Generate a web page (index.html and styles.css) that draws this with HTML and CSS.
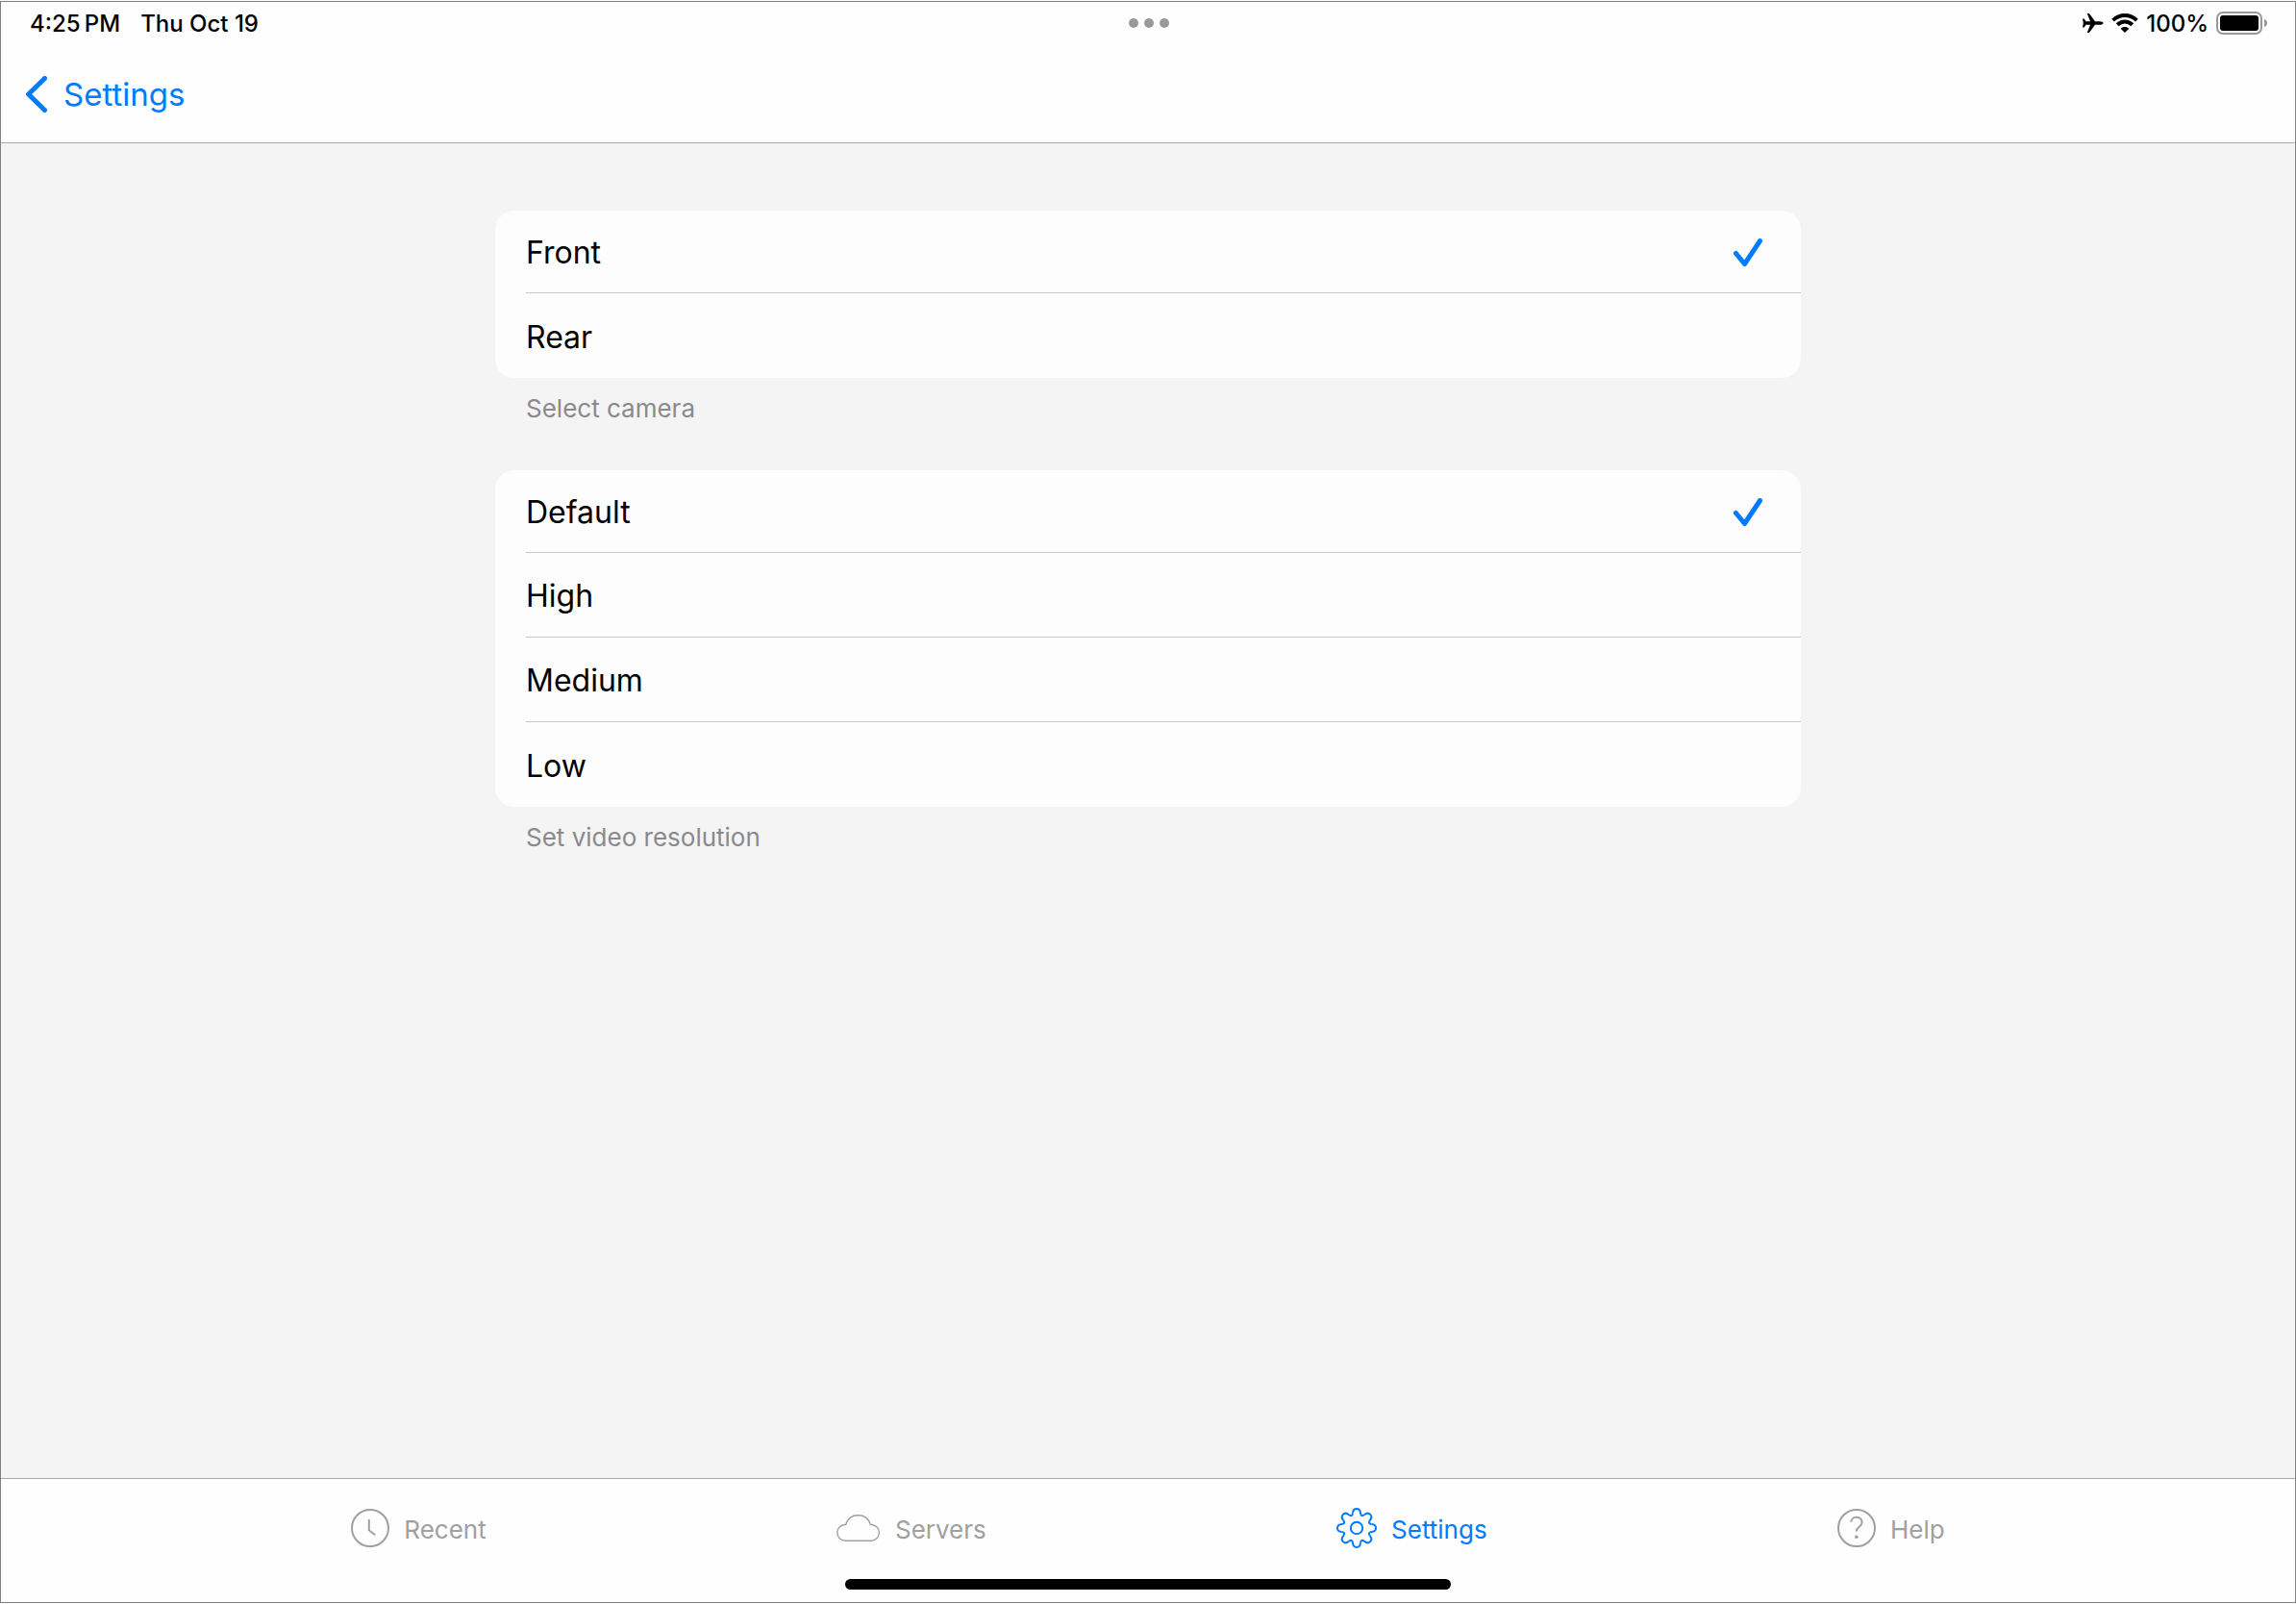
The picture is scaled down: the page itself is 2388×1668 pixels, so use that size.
FILE: index.html
```html
<!DOCTYPE html>
<html lang="en">
<head>
  <meta charset="UTF-8">
  <meta name="viewport" content="width=device-width, initial-scale=1.0">
  <title>Camera Settings</title>
  <link rel="stylesheet" href="styles.css">
</head>
<body>
  <div class="app">

    <div class="status-bar">
      <div class="status-left">
        <span>4:25&#8201;PM</span>
        <span>Thu Oct 19</span>
      </div>
      <svg class="dots" width="42" height="10" viewBox="0 0 42 10">
        <circle cx="5" cy="5" r="5"/>
        <circle cx="21" cy="5" r="5"/>
        <circle cx="37" cy="5" r="5"/>
      </svg>
      <div class="status-right">
        <svg width="22" height="20" viewBox="0 0 22 20">
          <path d="M21.5 10C21.5 9 20 8.2 18 8.2H13L7.3 .6C7 .2 6.5 0 6 0H4.8L8 8.2H3.6L1.6 5.4H0L.8 10 0 14.6H1.6L3.6 11.8H8L4.8 20H6C6.5 20 7 19.8 7.3 19.4L13 11.8H18C20 11.8 21.5 11 21.5 10Z"/>
        </svg>
        <svg width="28" height="20" viewBox="0 0 28 20">
          <path class="wave" d="M1.6 7.2C8.4 .4 19.6 .4 26.4 7.2"/>
          <path class="wave" d="M6.2 11.8C10.6 7.5 17.4 7.5 21.8 11.8"/>
          <path d="M14 20L9.6 15.7C12 13.4 16 13.4 18.4 15.7Z"/>
        </svg>
        <span>100%</span>
        <svg width="54" height="24" viewBox="0 0 54 24">
          <rect class="shell" x="1" y="1" width="46" height="22" rx="6"/>
          <rect x="4" y="4" width="40" height="16" rx="3"/>
          <path class="tip" d="M50 8C52 8.6 53 10 53 12S52 15.4 50 16Z"/>
        </svg>
      </div>
    </div>

    <header class="nav-bar">
      <a href="#" class="back">
        <svg width="22" height="38" viewBox="0 0 22 38">
          <path d="M19.5 2.5L2.6 19 19.5 35.5"/>
        </svg>
        Settings
      </a>
    </header>

    <main class="content">
      <section class="group">
        <div class="card">
          <label class="row">
            <span>Front</span>
            <input type="radio" name="camera" checked>
            <svg class="check" width="30" height="30" viewBox="0 0 30 30"><path d="M2.5 15.5L11.5 26.5 27.5 2.5"/></svg>
          </label>
          <label class="row">
            <span>Rear</span>
            <input type="radio" name="camera">
            <svg class="check" width="30" height="30" viewBox="0 0 30 30"><path d="M2.5 15.5L11.5 26.5 27.5 2.5"/></svg>
          </label>
        </div>
        <p class="note">Select camera</p>
      </section>

      <section class="group">
        <div class="card">
          <label class="row">
            <span>Default</span>
            <input type="radio" name="resolution" checked>
            <svg class="check" width="30" height="30" viewBox="0 0 30 30"><path d="M2.5 15.5L11.5 26.5 27.5 2.5"/></svg>
          </label>
          <label class="row">
            <span>High</span>
            <input type="radio" name="resolution">
            <svg class="check" width="30" height="30" viewBox="0 0 30 30"><path d="M2.5 15.5L11.5 26.5 27.5 2.5"/></svg>
          </label>
          <label class="row">
            <span>Medium</span>
            <input type="radio" name="resolution">
            <svg class="check" width="30" height="30" viewBox="0 0 30 30"><path d="M2.5 15.5L11.5 26.5 27.5 2.5"/></svg>
          </label>
          <label class="row">
            <span>Low</span>
            <input type="radio" name="resolution">
            <svg class="check" width="30" height="30" viewBox="0 0 30 30"><path d="M2.5 15.5L11.5 26.5 27.5 2.5"/></svg>
          </label>
        </div>
        <p class="note">Set video resolution</p>
      </section>
    </main>

    <footer class="footer">
      <nav class="tabs">
        <a href="#" class="tab">
          <svg width="40" height="40" viewBox="0 0 40 40">
            <circle cx="20" cy="20" r="19"/>
            <path d="M18.8 11V22.3L25.2 27.2"/>
          </svg>
          <span>Recent</span>
        </a>
        <a href="#" class="tab">
          <svg width="46" height="28" viewBox="0 0 46 28">
            <path stroke-width="1.4" d="M9.5 27.2C4.5 27.2 .8 23.6 .8 18.6 .8 14 4.7 10.4 9.8 10.2 11.6 4.5 16.4 .8 22.5 .8S33.4 4.5 35.3 10.2C40.4 10.4 44.4 14 44.4 18.6 44.4 23.6 40.6 27.2 35.6 27.2Z"/>
          </svg>
          <span>Servers</span>
        </a>
        <a href="#" class="tab active">
          <svg width="42" height="42" viewBox="-21 -21 42 42">
            <defs>
              <path id="tooth" d="M-4 -15.5C-3.6 -21.5 3.6 -21.5 4 -15.5C4.6 -12.5 5.6 -12.1 8.1 -13.8"/>
            </defs>
            <use href="#tooth"/>
            <use href="#tooth" transform="rotate(45)"/>
            <use href="#tooth" transform="rotate(90)"/>
            <use href="#tooth" transform="rotate(135)"/>
            <use href="#tooth" transform="rotate(180)"/>
            <use href="#tooth" transform="rotate(225)"/>
            <use href="#tooth" transform="rotate(270)"/>
            <use href="#tooth" transform="rotate(315)"/>
            <circle r="6.2"/>
          </svg>
          <span>Settings</span>
        </a>
        <a href="#" class="tab">
          <svg width="40" height="40" viewBox="0 0 40 40">
            <circle cx="20" cy="20" r="19"/>
            <path d="M14.3 13.8C14.3 10.8 16.6 8.8 19.9 8.8S25.6 11 25.6 14.3C25.6 18.8 19.7 18.6 19.7 23.4"/>
            <circle class="dot" cx="19.8" cy="29.3" r="1.8"/>
          </svg>
          <span>Help</span>
        </a>
      </nav>
      <div class="home-bar"></div>
    </footer>

  </div>
</body>
</html>
```
FILE: styles.css
```css
* {
  box-sizing: border-box;
}

body {
  margin: 0;
  padding: 1px 0;
  background: #fff;
  color: #000;
  font-family: Inter, "Liberation Sans", sans-serif;
}

a {
  color: inherit;
  text-decoration: none;
}

.app {
  display: flex;
  flex-direction: column;
  min-height: calc(100vh - 2px);
  border: 1px solid #808080;
  background: #fefefe;
}

/* status bar */
.status-bar {
  display: grid;
  grid-template-columns: 1fr auto 1fr;
  align-items: center;
  height: 44px;
  padding: 0 28px 0 30px;
  font-size: 24px;
  font-weight: 500;
}

.status-left {
  display: flex;
  gap: 21px;
}

.dots {
  fill: #999;
}

.status-right {
  display: flex;
  align-items: center;
  justify-content: flex-end;
  gap: 8px;
}

.wave {
  fill: none;
  stroke: #000;
  stroke-width: 4;
}

.shell {
  fill: none;
  stroke: #999;
  stroke-width: 2;
}

.tip {
  fill: #999;
}

/* navigation bar */
.nav-bar {
  display: flex;
  align-items: center;
  height: 103px;
  padding: 2px 26px 0;
  border-bottom: 1px solid #aaa;
}

.back {
  display: flex;
  align-items: center;
  gap: 17px;
  color: #007aff;
  font-size: 33px;
}

.back svg,
.check {
  fill: none;
  stroke: #007aff;
  stroke-width: 5;
  stroke-linecap: round;
  stroke-linejoin: round;
}

/* option lists */
.content {
  flex: 1;
  padding: 70px 24px;
  background: #f4f4f4;
}

.group {
  max-width: 1358px;
  margin: 0 auto 48px;
}

.card {
  border-radius: 20px;
  background: #fdfdfd;
}

.row {
  display: grid;
  grid-template-columns: 1fr 30px;
  align-items: center;
  height: 88px;
  margin-left: 32px;
  padding: 2px 40px 0 0;
  border-bottom: 1px solid #c6c6c8;
  font-size: 32px;
}

.row:first-child {
  height: 86px;
}

.row:last-child {
  border-bottom: none;
}

.row input,
.check {
  grid-area: 1 / 2;
}

.row input {
  appearance: none;
  width: 30px;
  height: 30px;
  margin: 0;
}

.check {
  visibility: hidden;
}

.row input:checked + .check {
  visibility: visible;
}

.note {
  margin: 0;
  padding: 16px 32px 0;
  color: #8a8a8e;
  font-size: 26px;
  line-height: 32px;
}

/* tab bar */
.footer {
  display: flex;
  flex-direction: column;
  align-items: center;
  padding-bottom: 13px;
  border-top: 1px solid #aaa;
}

.tabs {
  display: flex;
  justify-content: space-evenly;
  width: 100%;
  height: 104px;
  padding-bottom: 2px;
}

.tab {
  display: flex;
  align-items: center;
  gap: 15px;
  color: #a0a0a0;
  font-size: 26px;
}

.tab svg {
  fill: none;
  stroke: currentColor;
  stroke-width: 2;
}

.tab .dot {
  fill: currentColor;
  stroke: none;
}

.tab span {
  padding-top: 3px;
}

.tab.active {
  color: #007aff;
}

.home-bar {
  width: 630px;
  height: 11px;
  border-radius: 6px;
  background: #000;
}
```
